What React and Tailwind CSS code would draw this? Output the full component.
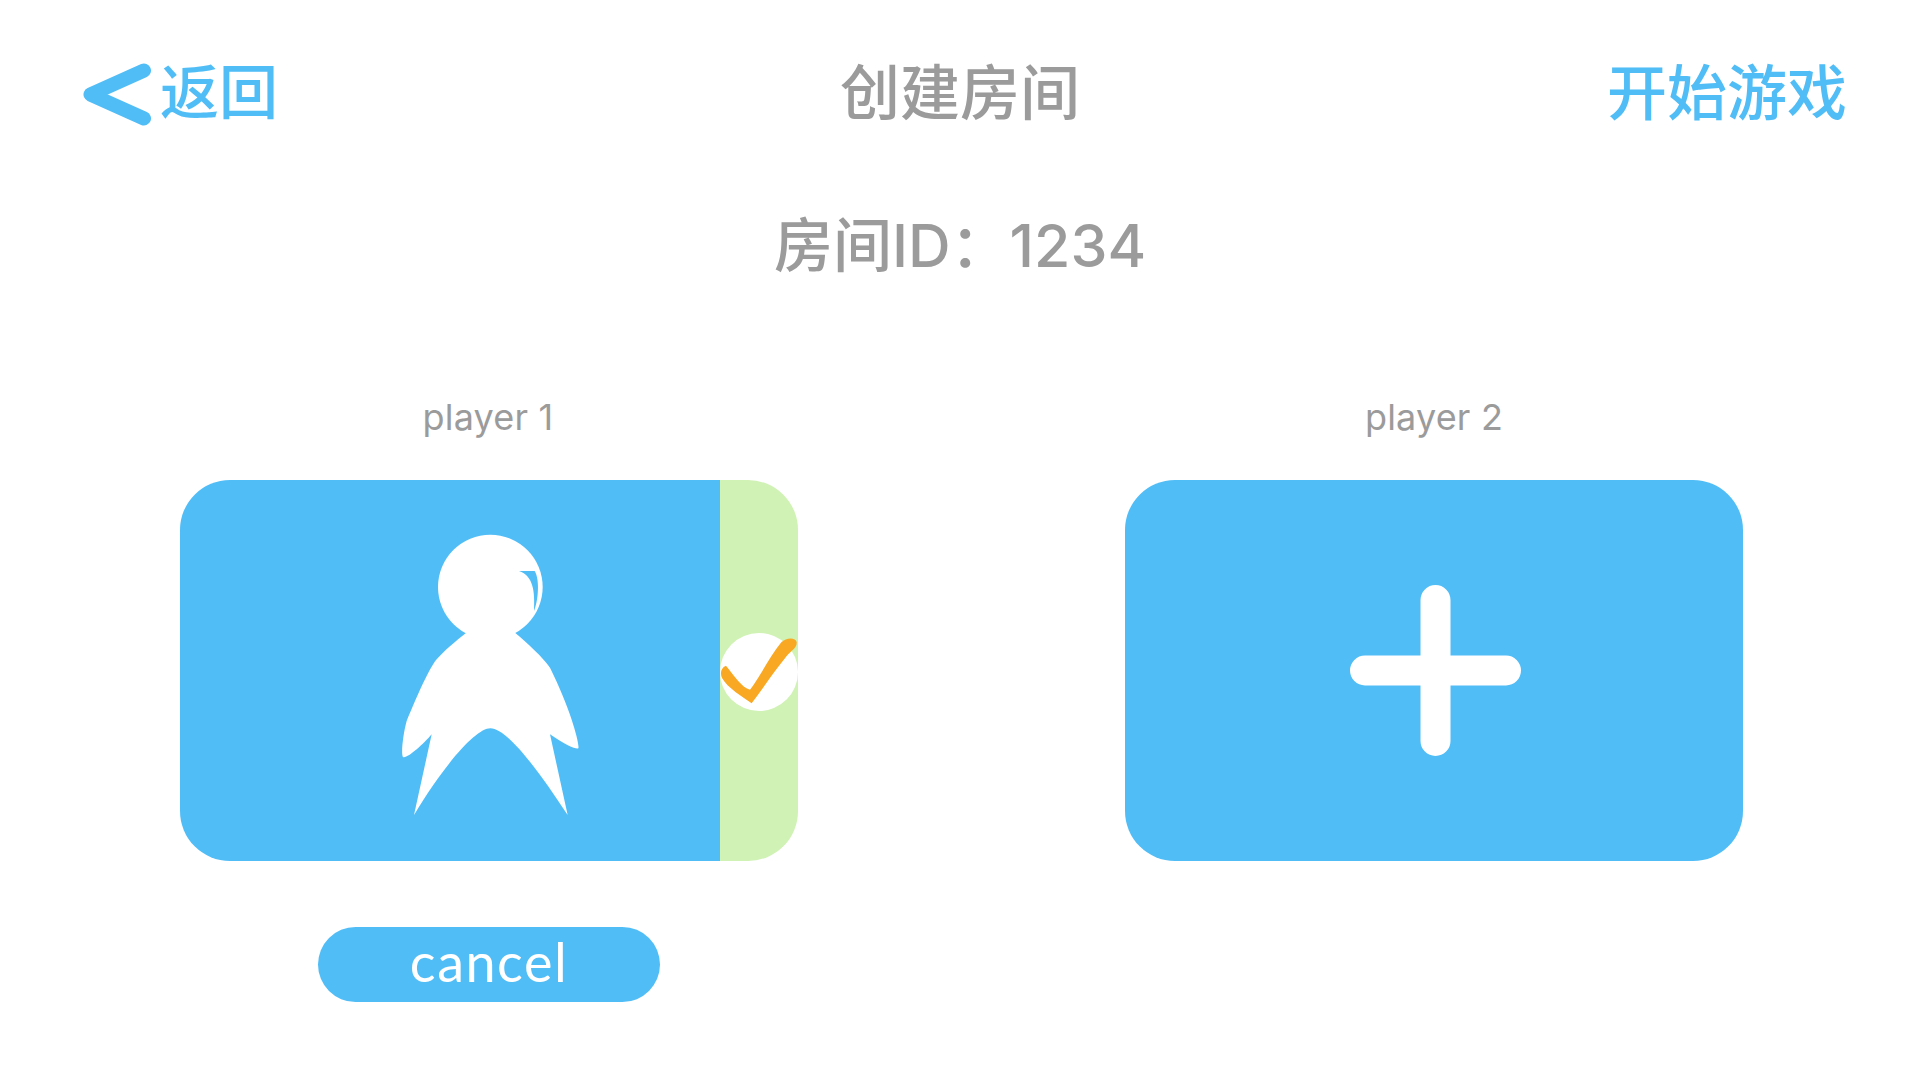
const cjk = "font-['Inter','Noto_Sans_CJK_SC',sans-serif]";

function Person() {
  return (
    <svg width="240" height="330" viewBox="0 0 720 990" className="block">
      <circle cx="361" cy="228" r="157" fill="#fff" />
      <path
        fill="#fff"
        d="M288 366 C255 392 222 420 200 445 C175 475 135 570 110 630 C100 665 92 730 99 738 C110 745 160 700 185 670 L132 912 C230 750 320 652 361 652 C410 652 500 770 593 912 L540 670 C590 705 620 716 625 712 C630 700 600 590 540 470 C520 440 470 395 436 366 Z"
      />
      <path fill="#50bdf7" d="M447 180 L494 180 C510 205 505 270 492 300 C495 240 490 195 447 180 Z" />
    </svg>
  );
}

function Check() {
  return (
    <svg width="78" height="78" viewBox="0 0 234 234" className="block overflow-visible">
      <g transform="translate(-60,-40)">
        <path
          fill="#f8a823"
          d="M78 138 C104 170 126 204 150 210 C175 178 210 110 244 68 C258 54 287 52 290 68 C291 88 270 94 256 114 C220 158 188 208 155 251 C128 232 82 204 66 175 C60 162 62 144 78 138 Z"
        />
      </g>
    </svg>
  );
}

function Back() {
  return (
    <svg width="70" height="76" viewBox="0 0 70 76" className="block">
      <polyline
        points="61,8 7.5,32 61,56"
        transform="translate(0,7.5)"
        fill="none"
        stroke="#50bdf7"
        strokeWidth="14"
        strokeLinecap="round"
        strokeLinejoin="round"
      />
    </svg>
  );
}

export default function App() {
  return (
    <div className={`w-[1920px] h-[1080px] bg-white flex flex-col overflow-hidden ${cjk}`}>
      <header className="grid grid-cols-3 items-center px-[73px] pt-[55px] h-[130px] text-[60px] leading-[76px] font-medium">
        <div className="flex items-center gap-[7px] ml-[10px] text-[#50bdf7]">
          <Back />
          <span className="text-[59px]">返回</span>
        </div>
        <div className="text-center text-[#9b9b9b]">创建房间</div>
        <div className="text-right text-[#50bdf7]">开始游戏</div>
      </header>

      <div className="mt-[71px] text-center text-[59px] leading-[90px] font-medium text-[#9b9b9b]">房间ID：1234</div>

      <div className="mt-[104px] pl-[180px] flex gap-[327px]">
        <section className="w-[618px] flex flex-col items-center">
          <div className="text-[36px] leading-[44px] text-[#9b9b9b] tracking-[0.2px] pr-[2px]">player 1</div>
          <div className="mt-[41px] w-[618px] h-[381px] flex">
            <div className="w-[540px] rounded-l-[50px] bg-[#50bdf7] flex items-center justify-center pt-[10px] pl-[80px]">
              <Person />
            </div>
            <div className="w-[78px] rounded-r-[50px] bg-[#d0f2b5] flex items-center justify-center">
              <div className="w-[78px] h-[78px] shrink-0 rounded-full bg-white mt-[2px]">
                <Check />
              </div>
            </div>
          </div>
          <button className="mt-[66px] w-[342px] h-[75px] rounded-full bg-[#50bdf7] text-white text-[54px] leading-[70px] font-['Lato',sans-serif] tracking-[1.5px] pb-[6px]">
            cancel
          </button>
        </section>

        <section className="w-[618px] flex flex-col items-center">
          <div className="text-[36px] leading-[44px] text-[#9b9b9b] tracking-[0.2px]">player 2</div>
          <div className="mt-[41px] w-[618px] h-[381px] rounded-[50px] bg-[#50bdf7] flex items-center justify-center pl-[3px]">
            <svg width="171" height="171" viewBox="0 0 171 171" className="block">
              <path d="M15 85.5 H156 M85.5 15 V156" fill="none" stroke="#fff" strokeWidth="30" strokeLinecap="round" />
            </svg>
          </div>
        </section>
      </div>
    </div>
  );
}
